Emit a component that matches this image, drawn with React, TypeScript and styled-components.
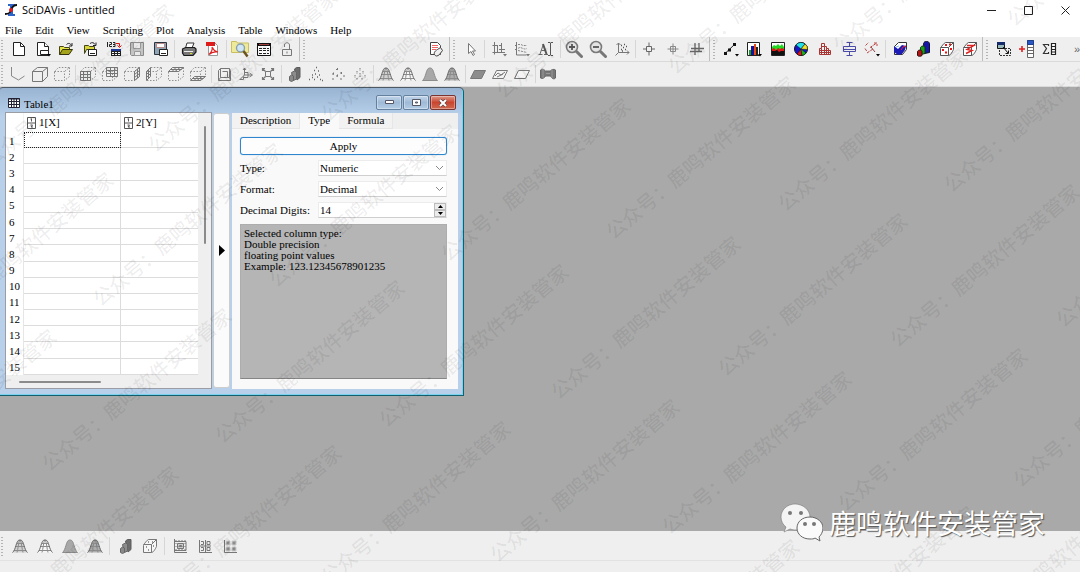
import React, { useState } from "react";
import styled, { createGlobalStyle, css } from "styled-components";

const Global = createGlobalStyle`
  *, *::before, *::after { box-sizing: border-box; }
  body { margin: 0; background: #efefef; overflow: hidden; }
  button, input, select { font: inherit; color: inherit; margin: 0; padding: 0; }
`;

const UI_FONT = `"Liberation Serif", "Noto Sans CJK SC", serif`;

const Page = styled.div`
  position: relative;
  min-height: 100vh;
  display: flex;
  flex-direction: column;
  overflow: hidden;
  background: #efefef;
  color: #000;
  font: 11px/11px ${UI_FONT};
`;

const TitleBar = styled.header`
  display: flex;
  align-items: center;
  gap: 8px;
  height: 20px;
  padding: 0 0 0 4px;
  background: #fff;
  font: 11px/18px "Open Sans", sans-serif;
`;

const AppName = styled.h1`
  flex: 1;
  margin: 0 0 0 -4px;
  font: inherit;
`;

const CaptionButton = styled.button`
  display: grid;
  place-items: center;
  width: 29px;
  height: 18px;
  border: 0;
  background: none;
`;

const MenuBar = styled.nav`
  display: flex;
  gap: 13px;
  height: 17px;
  padding: 4px 5px 0;
  background: #fff;
`;

const MenuItem = styled.button`
  border: 0;
  background: none;
  line-height: 11px;
`;

const ToolRow = styled.div`
  display: flex;
  height: 25px;
  border-bottom: 1px solid #dadada;
`;

const ToolBar = styled.div<{ $width?: number; $end?: boolean; $last?: boolean }>`
  display: flex;
  align-items: center;
  flex: ${(p) => (p.$last ? "1 1 0" : p.$width ? `0 0 ${p.$width}px` : "0 0 auto")};
  justify-content: ${(p) => (p.$end ? "flex-end" : "flex-start")};
  min-width: 0;
  margin-right: ${(p) => (p.$last ? 0 : 2)}px;
  border-right: ${(p) => (p.$last || !p.$width ? 0 : 1)}px solid #bdbdbd;
`;

const Handle = styled.span<{ $push?: boolean }>`
  flex: 0 0 7px;
  height: 20px;
  margin-right: ${(p) => (p.$push ? "auto" : 0)};
  background: radial-gradient(circle, #b4b4b4 0 1px, transparent 1px) 0 0 / 4px 3px repeat-y;
`;

const ToolButton = styled.button<{ $size?: number }>`
  flex: ${(p) => (p.$size ? `0 0 ${p.$size}px` : "1 1 0")};
  display: grid;
  place-items: center;
  min-width: 0;
  height: 24px;
  border: 0;
  background: none;
`;

const Divider = styled.span<{ $w?: number }>`
  flex: 0 0 ${(p) => p.$w ?? 4}px;
  height: 18px;
  background: linear-gradient(#d6d6d6, #d6d6d6) center / 1px 100% no-repeat;
`;

const More = styled.button`
  margin-left: auto;
  border: 0;
  background: none;
  color: #666;
  font: 11px/12px "Liberation Sans", sans-serif;
`;

const Workspace = styled.main`
  flex: 1;
  background: #a9a9a9;
`;

const SubWindow = styled.section`
  display: flex;
  flex-direction: column;
  width: 464px;
  height: 309px;
  padding: 0 5px 6px;
  border: solid #14606f;
  border-width: 1px 1px 1px 0;
  border-top-color: #4d5a66;
  border-radius: 3px 5px 0 0;
  background: linear-gradient(#98b4d2, #b8d0ea 28px);
  box-shadow: inset -1px -1px 0 #79d3ee;
`;

const SubTitle = styled.div`
  display: flex;
  align-items: center;
  gap: 1px;
  height: 24px;
  padding: 5px 2px 0 3px;
`;

const SubName = styled.h2`
  flex: 1;
  margin: 3px 0 0 3px;
  font: inherit;
`;

const FrameButton = styled.button<{ $close?: boolean }>`
  display: grid;
  place-items: center;
  width: 26px;
  height: 15px;
  border: 1px solid ${(p) => (p.$close ? "#7c3430" : "#64809f")};
  border-radius: 2px;
  background: ${(p) =>
    p.$close
      ? "linear-gradient(#dd9a8b, #c9452f 50%, #cf6a50)"
      : "linear-gradient(#c3d6ea, #9fbad7 50%, #b4cce6)"};
  box-shadow: inset 0 0 0 1px rgba(255, 255, 255, 0.35);
`;

const SubBody = styled.div`
  flex: 1;
  display: flex;
  min-height: 0;
`;

const Sheet = styled.div`
  flex: 0 0 207px;
  display: grid;
  grid-template: 1fr 14px / 1fr 13px;
  border: 1px solid #9a9da6;
  background: #efefef;
`;

const Grid = styled.table`
  width: 100%;
  height: 262px;
  border-collapse: separate;
  border-spacing: 0;
  table-layout: fixed;
  background: #fff;
`;

const HeadCell = styled.th<{ $w?: number }>`
  width: ${(p) => (p.$w ? `${p.$w}px` : "auto")};
  height: 19px;
  padding: 0 0 0 3px;
  border-right: 1px solid #dcdcdc;
  font-weight: normal;
  text-align: left;
  &:last-child { border-right: 0; }
  &:first-child { border-right-color: #f3f3f3; }
`;

const HeadLabel = styled.span`
  display: flex;
  align-items: center;
  gap: 3px;
`;

const RowHead = styled.th`
  padding: 2px 0 0 3px;
  border-right: 1px solid #e6e6e6;
  font-weight: normal;
  text-align: left;
  line-height: 11px;
`;

const Cell = styled.td<{ $current?: boolean }>`
  padding: 0;
  border-right: 1px solid #dcdcdc;
  border-bottom: 1px solid #dcdcdc;
  &:last-child { border-right: 0; }
  ${(p) => p.$current && css`outline: 1px dotted #222; outline-offset: -1px;`}
`;

const VTrack = styled.div`
  padding: 13px 0 0 6px;
`;

const HTrack = styled.div`
  padding: 6px 0 0 13px;
`;

const Thumb = styled.div<{ $w: number; $h: number }>`
  width: ${(p) => p.$w}px;
  height: ${(p) => p.$h}px;
  border-radius: 1px;
  background: #8b8b8b;
`;

const Collapse = styled.button`
  flex: 0 0 17px;
  display: grid;
  place-items: center;
  margin: 1px 2px 1px 1px;
  border: 1px solid #cdcdcd;
  border-radius: 3px;
  background: #fbfbfb;
`;

const Panel = styled.div`
  flex: 1;
  display: flex;
  flex-direction: column;
  min-width: 0;
  margin-top: 1px;
  background: #f9f9f9;
`;

const Tabs = styled.div`
  display: flex;
  height: 16px;
  background: #efefef;
`;

const Tab = styled.button<{ $on?: boolean }>`
  padding: 0 8px;
  border: 1px solid ${(p) => (p.$on ? "#f9f9f9" : "#e6e6e6")};
  border-width: 0 1px 1px 0;
  background: ${(p) => (p.$on ? "#f9f9f9" : "#f2f2f2")};
`;

const Form = styled.form`
  flex: 1;
  display: grid;
  grid-template: 18px repeat(3, 16px) 1fr / 78px minmax(0, 1fr);
  row-gap: 5px;
  align-items: center;
  padding: 8px 11px 10px 8px;
`;

const Apply = styled.button`
  grid-column: 1 / -1;
  height: 18px;
  border: 1px solid #2f86cf;
  border-radius: 3px;
  background: #fdfdfd;
  box-shadow: 0 0 1px #5aa9e6;
`;

const Field = styled.div`
  position: relative;
  display: flex;
  align-items: center;
  height: 16px;
  background: #fff;
  border: 1px solid #ececec;
  border-bottom-color: #cfcfcf;
`;

const Select = styled.select`
  flex: 1;
  min-width: 0;
  height: 14px;
  padding-left: 1px;
  border: 0;
  background: transparent;
  appearance: none;
`;

const Chevron = styled.svg`
  position: absolute;
  right: 2px;
  pointer-events: none;
`;

const NumberInput = styled.input`
  flex: 1;
  min-width: 0;
  height: 14px;
  padding-left: 1px;
  border: 0;
  background: transparent;
  appearance: textfield;
  &::-webkit-inner-spin-button { display: none; }
`;

const SpinColumn = styled.span`
  display: flex;
  flex-direction: column;
  width: 12px;
`;

const Step = styled.button`
  display: grid;
  place-items: center;
  height: 7px;
  border: 1px solid #bcbcbc;
  background: #ececec;
`;

const Info = styled.p`
  grid-column: 1 / -1;
  align-self: stretch;
  margin: 1px 0 0;
  padding: 3px 3px;
  border: 1px solid #adadad;
  border-bottom-color: #858585;
  background: #b5b5b5;
  white-space: pre-line;
`;

const BottomRow = styled.div`
  display: flex;
  align-items: center;
  height: 30px;
  border-bottom: 1px solid #e2e2e2;
`;

const StatusBar = styled.footer`
  height: 11px;
`;

const Brand = styled.div`
  position: absolute;
  right: 35px;
  bottom: 29px;
  display: flex;
  align-items: center;
  gap: 6px;
  color: #fff;
  font: 27px/40px "Noto Sans CJK SC", sans-serif;
  text-shadow: 1px 1px 1px #555;
`;

const MarkLayer = styled.div`
  position: absolute;
  inset: 0;
  overflow: hidden;
  pointer-events: none;
  color: rgba(0, 0, 0, 0.07);
  font: 500 20px/20px "Noto Sans CJK SC", sans-serif;
`;

const Mark = styled.span`
  position: absolute;
  margin: -10px 0 0 -10px;
  transform: rotate(-40deg);
  transform-origin: 10px 10px;
  white-space: nowrap;
`;

const Svg = ({ w = 16, h = 16, children }: { w?: number; h?: number; children: React.ReactNode }) => (
  <svg width={w} height={h} viewBox={`0 0 ${w} ${h}`} fill="none" stroke="#777" aria-hidden="true">
    {children}
  </svg>
);

const dropArrow = <path d="M12 13h4l-2 2.500z" fill="#000" stroke="none" />;
const solidCube = "M.5 5.500h10v10h-10zM.5 5.500l5-4h10l-5 4M15.500 1.500v9l-5 5";
const dashCube = (
  <path d="M.5 5.500h10v9h-10zM.5 5.500l4-4h11l-5 4M15.500 1.500v9l-5 4" strokeDasharray="1.500 1.500" stroke="#909090" />
);
const lens = (sign: string) => (
  <Svg w={18} h={18}>
    <path d="M11.500 11.500l5 5" stroke="#777" strokeWidth="3" strokeLinecap="round" />
    <circle cx="7" cy="7" r="5.500" fill="#e4e4e4" stroke="#7a7a7a" strokeWidth="1.600" />
    <path d={sign} stroke="#555" strokeWidth="1.800" />
  </Svg>
);
const bell = "M.5 14.500h15C12 12 12 2 8.500 2h-1C4 2 4 12 .5 14.500z";
const bellMesh = (
  <>
    <path d="M2 12.500h12M3.500 8.500h9M5 5.500h6M7.500 2C6.500 5 6 11 5 14.500M8.500 2C9.500 5 10 11 11 14.500" stroke="#8c8c8c" />
    <path d="M.5 14.500C4 12 4 2 7.500 2h1C12 2 12 12 15.500 14.500" stroke="#666" />
  </>
);
const dice = "M1.500 7.500c0-1 4-6 5-6h8v7c-1 2-3 6-5 6h-8zM1.500 6.500h8v8M9.500 6.500l5-5";

const icons: Record<string, React.ReactNode> = {
  page: <Svg><path d="M2.500 1.500h7l4 4v9h-11z" fill="#fff" stroke="#222" /><path d="M9.500 1.500v4h4" stroke="#222" /></Svg>,
  pageMenu: <Svg><path d="M2.500 1.500h7l4 4v9h-11z" fill="#fff" stroke="#222" /><path d="M9.500 1.500v4h4M5.500 9.500h8v4h-8z" fill="#fff" stroke="#222" />{dropArrow}</Svg>,
  open: <Svg><path d="M1.500 13.500v-8h4l1 1h5v2" fill="#e6e34a" stroke="#444419" /><path d="M1.500 13.500l3-5h10l-3.500 5z" fill="#a5a31c" stroke="#333310" /><path d="M8.500 3.500c2-2 4-1 5 1M14 2v3h-3" stroke="#222" /></Svg>,
  openTemplate: <Svg><path d="M2.500 12.500v-8h4l1 1h5v3h-8z" fill="#d9d63a" stroke="#444419" /><path d="M8 2.500c2-1.500 4-1 5 1M14 1.500v3h-3" stroke="#222" /><path d="M6.500 8.500h8v6h-8z" fill="#fff" stroke="#222" /><path d="M8 12.500h5" stroke="#222" /></Svg>,
  importAscii: <Svg><path d="M1.500 1v5M3.500 1.500h2v2h-2v2h2.500M7 1.500h2v4H7M7 3.500h2" stroke="#222" /><path d="M10 2.500h3.500v3M11.500 4.500l2 2 2-2" stroke="#e01515" /><path d="M5 8h10v7H5z" fill="#222" stroke="none" /><path d="M5 8h10v2H5z" fill="#203a9a" stroke="none" /><path d="M6 11.500h8M6 13.500h8" stroke="#fff" strokeDasharray="2 1" /></Svg>,
  save: <Svg><path d="M1.500 1.500h13v13h-12l-1-1z" fill="#c4c4c4" stroke="#8a8a8a" /><path d="M4.500 1.500h7v6h-7zM5.500 10.500h6v4h-6z" fill="#e9e9e9" stroke="#999" /></Svg>,
  saveTemplate: <Svg><path d="M1.500 1.500h12v12h-12z" fill="#8fa5b5" stroke="#2a3540" /><path d="M3.500 2.500h8v4h-8z" fill="#fff" stroke="#b88" /><path d="M6.500 8.500h8v6h-8z" fill="#fff" stroke="#222" /><path d="M8 12.500h5" stroke="#222" /></Svg>,
  print: <Svg><path d="M4.500 7l1.500-5h7l-2 5z" fill="#fff" stroke="#333" /><path d="M1.500 8l3-1.500h9l1.500 1.500v3l-3 3.500h-9L1.500 12z" fill="#777" stroke="#1c1c1c" strokeWidth="1.200" /><path d="M3 10.500h9" stroke="#eee" /><path d="M9 12.500h2" stroke="#dada22" /></Svg>,
  pdf: <Svg><path d="M4.500 1.500h6l3 3v10h-9z" fill="#fff" stroke="#999" /><path d="M2 1h9v4H2z" fill="#dd1b1b" stroke="none" /><path d="M5 13.500c3-3 3.500-6 3-7.500M8.500 6.500c1 3 3 4 5.500 4.500M5 13.500c2-2 6-3 9-2.500" stroke="#dd2222" strokeWidth="1.200" /></Svg>,
  explorer: <Svg w={20} h={18}><path d="M1.500 12.500v-11h5l1 1.500h11v9.500z" fill="#efe99a" stroke="#c9bf5e" /><circle cx="10.500" cy="8" r="4" fill="#cfe6f5" stroke="#8aa0b0" strokeWidth="1.400" /><path d="M13.500 11l4 5.500" stroke="#6b5322" strokeWidth="2.500" /></Svg>,
  table: <Svg><path d="M1.500 2.500h13v12h-13z" fill="#fff" stroke="#111" /><path d="M1 2h14v3H1z" fill="#111" stroke="none" /><path d="M3 3.500h10" stroke="#a44" /><path d="M3 7.500h10M3 9.500h10M3 12.500h10" stroke="#222" strokeDasharray="3 1" /></Svg>,
  lock: <Svg><path d="M3.500 8.500h9v6h-9z" fill="#eee" stroke="#777" /><path d="M5.500 6V4c0-3 5-3 5 0v4M8 10.500v2" stroke="#777" /></Svg>,
  note: <Svg><path d="M2.500 1.500h7l3 3v9h-10z" fill="#fff" stroke="#444" /><path d="M4 4.500h6M4 6.500h6M4 8.500h4" stroke="#e66" strokeWidth="1.200" /><path d="M6.500 13.500c-1-2 1-4 3-5l3-2 2 3-3 4c-2 2-4 2-5 0z" fill="#eee" stroke="#444" /></Svg>,
  pointer: <Svg><path d="M5.500 2.500v10l2.500-2 2 4 1.500-1-2-3.500h3z" fill="#fff" stroke="#777" /></Svg>,
  axes: <Svg><path d="M3.500 1v12.500M1.500 11.500h6M1.500 4.500h5M6.500 4v8M10.500 2v10M8 4.500h2M8 8.500h6M7 11.500h7" stroke="#777" /><path d="M12 13h4l-2 2.500z" fill="#777" stroke="none" /></Svg>,
  curves: <Svg><path d="M2.500 1v13h10M1 4.500h1M1 8.500h1" stroke="#777" /><path d="M4 3.500h3l2 1h4M4 7.500c3-3 5 2 9 0M4 9.500l9 2" stroke="#888" strokeDasharray="2 1" /><path d="M12 13h4l-2 2.500z" fill="#777" stroke="none" /></Svg>,
  text: <Svg><path d="M.5 13.500h4M6 13.500h4M2 13l3.500-10M3.500 9.500h4" stroke="#666" /><path d="M5 3l3.500 10" stroke="#555" strokeWidth="2" /><path d="M12.500 2v12M10 1.500h2l.5.5.5-.5h2M10 14.500h2l.5-.5.5.500h2" stroke="#555" /></Svg>,
  zoomIn: lens("M4 7h6M7 4v6"),
  zoomOut: lens("M4 7h6"),
  rescale: <Svg><path d="M4.500 2v9.500H15M2.500 4l2-2 2 2M13 9.500l2 2-2 2M4.500 11.500l-3 3" /><path d="M7 4.500h1M10 3.500h1M12 5.500h1M9 6.500h1M7 8.500h1M11 8.500h1M8 10h1" stroke="#555" strokeWidth="1.300" /></Svg>,
  reader: <Svg><path d="M5.500 5.500h5v5h-5zM8 1.500v4M8 10.500v4M2 8h3M11 8h3" stroke="#666" /></Svg>,
  selector: <Svg><path d="M5.500 5.500h5v5h-5zM8 2.500v11M2.500 8h11" stroke="#888" /></Svg>,
  move: <Svg><path d="M6 2v12M10 2v9M2 7.500h13M1 10.500h12" stroke="#666" strokeWidth="1.300" /></Svg>,
  line: <Svg><path d="M2 12.500l10-9.500" stroke="#222" /><path d="M1 11h3v3H1zM5 7.500h3v3H5zM10 2h3v3h-3z" fill="#111" stroke="none" />{dropArrow}</Svg>,
  bars: <Svg><path d="M1.500 1.500h12v13h-12z" fill="#fff" stroke="#222" /><path d="M3 9h2v5H3z" fill="#17a017" stroke="none" /><path d="M5 5h3v9H5z" fill="#11119c" stroke="none" /><path d="M8 3h2v11H8z" fill="#e84a12" stroke="none" /><path d="M10 6h2v8h-2z" fill="#222" stroke="none" />{dropArrow}</Svg>,
  area: <Svg><path d="M1.500 1.500h13v13h-13z" fill="#fff" stroke="#222" /><path d="M2 6l2-2 2 1 2-2 2 2 2-2 2 3v4H2z" fill="#22d822" stroke="none" /><path d="M2 8l2-1 2 2 2-2 2 1 2-1 2 1v3H2z" fill="#e01818" stroke="none" /><path d="M2 10l3 0 2-1 2 2 2-1 3 0v4H2z" fill="#111" stroke="none" /></Svg>,
  pie: <Svg><circle cx="8" cy="8" r="6.500" fill="#1515c8" stroke="#111" /><path d="M8 8L3 4a6 6 0 0 1 9-1z" fill="#20dfe8" stroke="#111" strokeWidth=".5" /><path d="M8 8l4-5a6 6 0 0 1 2.500 5.500z" fill="#f2e32c" stroke="#111" strokeWidth=".5" /><path d="M8 8l1 6.500a6 6 0 0 1-5-1.500z" fill="#e01818" stroke="#111" strokeWidth=".5" /><path d="M8 8l5 4a6 6 0 0 1-4 2.500z" fill="#1cb21c" stroke="#111" strokeWidth=".5" /></Svg>,
  histogram: <Svg><path d="M2.500 13.500v-6h2v-5h3v3h2v2h2v2h2v4zM4.500 7.500v6M7.500 5.500v8M9.500 7.500v6M11.500 9.500v4M2.500 9.500h9M2.500 11.500h11M4.500 5.500h3" stroke="#a83434" /></Svg>,
  box: <Svg><path d="M2.500 5.500h12v5h-12zM2.500 8.500h12M8.500 2v3M8.500 11v3M5.500 1.500h6M5.500 14.500h6" stroke="#4a4aa8" /></Svg>,
  vectors: <Svg><path d="M1.500 4.500l3-3M6 6.500l6-4M3 12l6-4M10 2h3v3M1 7.500l2 3" stroke="#b44" strokeDasharray="3 1" /><path d="M7 6l4 5" stroke="#844" />{dropArrow}</Svg>,
  surface: <Svg><path d="M2.500 5.500l4-4h8v7l-4 5h-8z" fill="#fff" stroke="#333" /><path d="M2 5l4 3 4-4 4 1-1 4-3 4-4 1-4-3z" fill="#1c1cb5" stroke="none" /><path d="M9 9l2-3 3-1" stroke="#e22" /><path d="M4 6l3-1" stroke="#8be" /></Svg>,
  bars3d: <Svg><path d="M8.500 2.500c1-3 5-3 6 0v9l-5 1z" fill="#1616a8" stroke="#112" /><path d="M5.500 6.500c1-2 4-2 4.500 0v6l-4 1z" fill="#16a016" stroke="#131" /><path d="M2.500 10.500c1-2 4-2 4.500 0v4c-1 1-4 1-4.500 0z" fill="#b01616" stroke="#311" /></Svg>,
  scatter3d: <Svg><path d={dice} fill="#fff" stroke="#555" /><path d="M6 4h2M10 3.500h2M3 9h2M6 11.500h2M11 8h2" stroke="#e11" strokeWidth="1.800" /></Svg>,
  line3d: <Svg><path d={dice} fill="#fff" stroke="#555" /><path d="M5 4.500h7l-7 4 5 1-6 3" stroke="#d22" strokeWidth="1.400" /></Svg>,
  selectCol: <Svg><path d="M1.500 1.500h7v6h-7z" fill="#9bb" stroke="#111" /><path d="M1 1h8v3H1z" fill="#142a6b" stroke="none" /><path d="M9 7.500h5.500v7h-11v-6" stroke="#333" strokeDasharray="2 1" /><path d="M7 6l5 6M12.500 9.500v3h-3" stroke="#111" /></Svg>,
  addCol: <Svg w={18} h={18}><path d="M1 9h6M4 6v6" stroke="#e02020" strokeWidth="1.600" /><path d="M9.500.5h6v17h-6zM9.500 7.500h6M9.500 10.500h6M9.500 13.500h6" fill="#fff" stroke="#666" /><path d="M9.500.5h6v4h-6z" fill="#2857c4" stroke="#1c3c8c" /></Svg>,
  sigma: <Svg><path d="M6.500 5V3.500h-5l3 4-3 5h5V11" stroke="#333" strokeWidth="1.200" /><path d="M9.500 2.500h4v11h-4zM9.500 5.500h4M9.500 8.500h4M9.500 11h4" fill="#fff" stroke="#222" strokeWidth="1.200" /></Svg>,
  corner: <Svg><path d="M1.500 1v9l7 4 6-4" stroke="#888" /></Svg>,
  frame: <Svg><path d={solidCube} /></Svg>,
  box3d: <Svg>{dashCube}</Svg>,
  gridFront: <Svg>{dashCube}<path d="M.5 5.500h10v9h-10zM.5 8.500h10M.5 11.500h10M3.500 5.500v9M7.500 5.500v9" /></Svg>,
  gridBack: <Svg>{dashCube}<path d="M4.500 1.500h11v9h-11zM4.500 4.500h11M4.500 7.500h11M8.500 1.500v9M12.500 1.500v9" /></Svg>,
  gridRight: <Svg>{dashCube}<path d="M10.500 5.500l5-4v9l-5 4zM13.500 3v9M10.500 8.500l5-4M10.500 11.500l5-4" /></Svg>,
  gridLeft: <Svg>{dashCube}<path d="M.5 5.500l4-4v9l-4 4zM2.500 3v9M.5 8.500l4-4M.5 11.500l4-4" /></Svg>,
  gridTop: <Svg>{dashCube}<path d="M.5 5.500l4-4h11l-5 4zM2.500 3.500h11M4 5.500l4-4M7 5.500l5-4" /></Svg>,
  gridBottom: <Svg>{dashCube}<path d="M.5 14.500l4-4h11l-5 4zM2.500 12.500h11M4 14.500l4-4M7 14.500l5-4" /></Svg>,
  perspective: <Svg><path d="M4.500 2.500h9v9h-9zM2.500 14.500h12M2.500 14.500l2-3M14.500 14.500l-1-3M2.500 4.500v10M14.500 4.500v10M2.500 4.500l2-2M14.500 4.500l-1-2M6.500 5.500h5v6" /></Svg>,
  reset: <Svg><path d="M6.500 2v7h7M6.500 9l-4 4M5 4l1.500-2L8 4M6 11.500h4v-5h-3M1.500 13.500h4v-3M11.500 7l3 2-3 2" /></Svg>,
  fit: <Svg><path d="M5.500 5.500h5v5h-5z" /><path d="M2.500 2.500l3 3M13.500 2.500l-3 3M2.500 13.500l3-3M13.500 13.500l-3-3M2.500 5V2.500H5M11 2.500h2.500V5M2.500 11v2.500H5M11 13.500h2.500V11" strokeWidth="1.200" /></Svg>,
  bars3dGray: <Svg><path d="M8.500 3l2-1.500h3.500v10l-3 2.500z" fill="#6c6c6c" stroke="#5c5c5c" /><path d="M5.500 6.500l3-1.500 2 1v7l-3 1.500z" fill="#8c8c8c" stroke="#666" /><path d="M3.500 10.500l2-1.500 2 1v4.500l-2 1-2-1z" fill="#8a8a8a" stroke="#666" /></Svg>,
  dots: <Svg><path d="M8 1.500h1M6 4.500h1M10 5h1M7 8h1M4 9h1M11 9h1M9 11h1M1 13.500h1M6 13.500h1M12 13.500h1M14 14.500h1M4 11.500h1" strokeWidth="1.300" stroke="#666" /></Svg>,
  crosses: <Svg><path d="M6 3.500h3M7.500 2v3M2 8h3M3.500 6.500v3M10 7h3M11.500 6v3M6 10h3M7.500 8.500v3M2 13h3M10 13h3M13 10h2" stroke="#777" strokeDasharray="2 1" /></Svg>,
  lines3d: <Svg><path d="M8 2v3M5 5v3M11 5v3M8 7v4M3 9v3M13 9v3M5 12v2M10 12v2" stroke="#777" strokeDasharray="1.500 1" /></Svg>,
  meshFill: <Svg><path d={bell} fill="#d0d0d0" stroke="none" />{bellMesh}</Svg>,
  mesh: <Svg><path d={bell} fill="#f7f7f7" stroke="none" />{bellMesh}</Svg>,
  bellFill: <Svg><path d={bell} fill="#a8a8a8" stroke="#8c8c8c" /></Svg>,
  bellMeshDark: <Svg><path d={bell} fill="#adadad" stroke="none" />{bellMesh}</Svg>,
  floorFill: <Svg w={18}><path d="M1.500 12.500l4-8h11l-4 8z" fill="#8c8c8c" /></Svg>,
  floorIso: <Svg w={18}><path d="M1.500 12.500l4-8h11l-4 8z" fill="#f2f2f2" /><path d="M4 10l3-3 3 2 4-3M6 11l6-3" /></Svg>,
  floor: <Svg w={18}><path d="M1.500 12.500l4-8h11l-4 8z" fill="#f4f4f4" /></Svg>,
  animate: <Svg w={18}><path d="M1.500 4c2-2 4 0 5 1h5c1-2 4-2 5-1v8c-2 2-4 0-5-2h-5c-1 2-3 3-5 2z" fill="#777" stroke="#666" /><path d="M4 3v9M13 3v9M7 7.500h4" stroke="#999" /></Svg>,
  cubeDots: <Svg><path d={dice} fill="#f6f6f6" /><path d="M6 4h1M10 4h1M4 9h1M6 12h1M11 8h1" strokeWidth="1.500" /></Svg>,
  contour: <Svg><path d="M2.500 1v13.500H15M2.500 3.500H14v9H2.500" /><path d="M5.500 5.500h6v5h-6zM7.500 7.500h2v1h-2z" fill="#ccc" /><path d="M4 2v12M7 2v12M10 2v12M13 2v12" strokeDasharray="1 2" /></Svg>,
  contourLines: <Svg><path d="M2.500 2v12.500H15" /><path d="M4 3.500h2.500v3H4M10 3.500h3v3h-3zM4 9.500h2.500v3H4M10 9.500h3v3h-3zM3 8h11M8.500 2v12" /></Svg>,
  grayMap: <Svg><path d="M2.500 2v12.500H15" /><path d="M4 3h4v4H4zM10 3h4v4h-4zM4 9h4v4H4zM10 9h4v4h-4z" fill="#8c8c8c" stroke="#ccc" /></Svg>,
};

const Tools = ({ names, size, gap }: { names: string[]; size?: number; gap?: number }) => (
  <>
    {names.map((n, i) =>
      n === "|" ? (
        <Divider key={i} $w={gap} />
      ) : (
        <ToolButton key={i} type="button" aria-label={n} $size={size}>
          {icons[n]}
        </ToolButton>
      )
    )}
  </>
);

const split = (s: string) => s.split(" ");
const fileTools = split("page pageMenu open openTemplate importAscii save saveTemplate | print pdf | explorer table lock");
const graphTools = split("pointer | axes curves text | zoomIn zoomOut rescale | reader selector move");
const plotTools = split("line bars area pie histogram box vectors | surface bars3d scatter3d line3d");
const columnTools = split("selectCol addCol sigma");
const surfaceTools = split(
  "corner frame box3d | gridFront gridBack gridRight gridLeft gridTop gridBottom | perspective reset fit | bars3dGray dots crosses lines3d | meshFill mesh bellFill bellMeshDark | floorFill floorIso floor | animate"
);
const matrixTools = split("meshFill mesh bellFill bellMeshDark | bars3dGray cubeDots | contour contourLines grayMap");
const menus = ["File", "Edit", "View", "Scripting", "Plot", "Analysis", "Table", "Windows", "Help"];
const rows = Array.from({ length: 15 }, (_, i) => i + 1);

// Centre of the first character of each repeated mark.
const marks: [number, number][] = [
  [-6, 156], [158, 141], [331, 110], [506, 87], [678, 63], [843, 42], [1017, 15],
  [-66, 324], [103, 295], [279, 276], [451, 250], [616, 228], [788, 200], [954, 181],
  [-123, 481], [52, 460], [225, 432], [389, 416], [561, 388], [728, 365], [900, 336], [1066, 316],
  [-1, 618], [162, 597], [331, 573], [500, 551], [672, 523], [848, 500], [1023, 476],
  [620, 691], [796, 658], [967, 635],
];

const NumericIcon = () => (
  <svg width="9" height="12" viewBox="0 0 9 12" fill="none" stroke="#555" aria-hidden="true">
    <path d="M.5.500h8v11h-8zM.5 6h8M4.500 1.500v3M3.500 2h1M3.500 8h2L4 10h2" />
  </svg>
);

const ComboBox = ({ id, options }: { id: string; options: string[] }) => (
  <Field>
    <Select id={id}>
      {options.map((o) => (
        <option key={o}>{o}</option>
      ))}
    </Select>
    <Chevron width="9" height="6" viewBox="0 0 9 6" fill="none" stroke="#888">
      <path d="M1 1l3.500 3.500L8 1" />
    </Chevron>
  </Field>
);

export default function App() {
  const [tab, setTab] = useState("Type");
  const [digits, setDigits] = useState(14);
  return (
    <Page>
      <Global />
      <TitleBar>
        <svg width="14" height="14" viewBox="0 0 14 14" aria-hidden="true">
          <path d="M4 1h7v2H9v8h2v2H4v-2h2V3H4z" fill="#2d62c8" />
          <path d="M1 11c4 0 5-1 6-4s3-5 6-5" fill="none" stroke="#111" strokeWidth="1.800" />
          <circle cx="7" cy="7" r="2" fill="#e01c1c" />
        </svg>
        <AppName>SciDAVis - untitled</AppName>
        <CaptionButton type="button" aria-label="Minimize">
          <svg width="9" height="9" stroke="#222"><path d="M0 4.500h9" /></svg>
        </CaptionButton>
        <CaptionButton type="button" aria-label="Maximize">
          <svg width="9" height="9" stroke="#222" fill="none"><path d="M.5.500h8v8h-8z" /></svg>
        </CaptionButton>
        <CaptionButton type="button" aria-label="Close">
          <svg width="9" height="9" stroke="#222"><path d="M.5.500l8 8M8.500.500l-8 8" /></svg>
        </CaptionButton>
      </TitleBar>
      <MenuBar>
        {menus.map((m) => (
          <MenuItem key={m} type="button">{m}</MenuItem>
        ))}
      </MenuBar>
      <ToolRow>
        <ToolBar $width={300}>
          <Handle />
          <Tools names={fileTools} />
        </ToolBar>
        <ToolBar $width={148} $end>
          <Handle $push />
          <Tools names={["note"]} size={26} />
        </ToolBar>
        <ToolBar $width={258}>
          <Handle />
          <Tools names={graphTools} />
        </ToolBar>
        <ToolBar $width={271}>
          <Handle />
          <Tools names={plotTools} />
        </ToolBar>
        <ToolBar $last>
          <Handle />
          <Tools names={columnTools} size={23} />
          <More type="button" aria-label="More tools">»</More>
        </ToolBar>
      </ToolRow>
      <ToolRow>
        <ToolBar>
          <Handle />
          <Tools names={surfaceTools} size={22} />
        </ToolBar>
      </ToolRow>
      <Workspace>
        <SubWindow>
          <SubTitle>
            <svg width="12" height="10" viewBox="0 0 12 10" fill="#fff" stroke="#223" aria-hidden="true">
              <path d="M.5.500h11v9H.5zM.5 3.500h11M.5 6.500h11M3.500.500v9M6 .5v9M8.500.500v9" />
              <path d="M0 1h12" />
            </svg>
            <SubName>Table1</SubName>
            <FrameButton type="button" aria-label="Minimize window">
              <svg width="9" height="5"><path d="M.5.500h8v3h-8z" fill="#fff" stroke="#556" /></svg>
            </FrameButton>
            <FrameButton type="button" aria-label="Maximize window">
              <svg width="9" height="8"><path d="M.5.500h8v6h-8z" fill="#fff" stroke="#556" /><path d="M3.500 3h2v1h-2z" fill="#9bd" stroke="#556" /></svg>
            </FrameButton>
            <FrameButton type="button" $close aria-label="Close window">
              <svg width="10" height="8" fill="none"><path d="M2 1l6 6M8 1L2 7" stroke="#644" strokeWidth="3.500" /><path d="M2 1l6 6M8 1L2 7" stroke="#fff" strokeWidth="2" /></svg>
            </FrameButton>
          </SubTitle>
          <SubBody>
            <Sheet>
              <Grid>
                <thead>
                  <tr>
                    <HeadCell $w={18} aria-label="Row" />
                    <HeadCell $w={97}><HeadLabel><NumericIcon />1[X]</HeadLabel></HeadCell>
                    <HeadCell><HeadLabel><NumericIcon />2[Y]</HeadLabel></HeadCell>
                  </tr>
                </thead>
                <tbody>
                  {rows.map((r) => (
                    <tr key={r}>
                      <RowHead scope="row">{r}</RowHead>
                      <Cell $current={r === 1} />
                      <Cell />
                    </tr>
                  ))}
                </tbody>
              </Grid>
              <VTrack><Thumb $w={2} $h={118} /></VTrack>
              <HTrack><Thumb $w={82} $h={2} /></HTrack>
            </Sheet>
            <Collapse type="button" aria-label="Hide column panel">
              <svg width="6" height="11"><path d="M0 0l6 5.500L0 11z" /></svg>
            </Collapse>
            <Panel>
              <Tabs role="tablist">
                {["Description", "Type", "Formula"].map((t) => (
                  <Tab key={t} type="button" role="tab" aria-selected={t === tab} $on={t === tab} onClick={() => setTab(t)}>
                    {t}
                  </Tab>
                ))}
              </Tabs>
              <Form onSubmit={(e) => e.preventDefault()}>
                <Apply type="submit">Apply</Apply>
                <label htmlFor="type">Type:</label>
                <ComboBox id="type" options={["Numeric"]} />
                <label htmlFor="format">Format:</label>
                <ComboBox id="format" options={["Decimal"]} />
                <label htmlFor="digits">Decimal Digits:</label>
                <Field>
                  <NumberInput id="digits" type="number" value={digits} onChange={(e) => setDigits(Number(e.target.value))} />
                  <SpinColumn>
                    <Step type="button" aria-label="Increase" onClick={() => setDigits(digits + 1)}>
                      <svg width="5" height="3"><path d="M0 3l2.500-3L5 3z" /></svg>
                    </Step>
                    <Step type="button" aria-label="Decrease" onClick={() => setDigits(digits - 1)}>
                      <svg width="5" height="3"><path d="M0 0l2.500 3L5 0z" /></svg>
                    </Step>
                  </SpinColumn>
                </Field>
                <Info>{"Selected column type:\nDouble precision\nfloating point values\nExample: 123.12345678901235"}</Info>
              </Form>
            </Panel>
          </SubBody>
        </SubWindow>
      </Workspace>
      <BottomRow>
        <Handle />
        <Tools names={matrixTools} size={25} gap={5} />
      </BottomRow>
      <StatusBar />
      <MarkLayer aria-hidden="true">
        {marks.map(([x, y]) => (
          <Mark key={`${x},${y}`} style={{ left: x, top: y }}>公众号：鹿鸣软件安装管家</Mark>
        ))}
      </MarkLayer>
      <Brand>
        <svg width="43" height="40" viewBox="0 0 43 40" aria-hidden="true">
          <path d="M15 1C7 1 1 7 1 14c0 4 2 8 5 10l-2 5 6-3c2 .8 4 1 6 1 8 0 14-6 14-13S23 1 15 1z" fill="#f4f4f4" stroke="#777" strokeWidth=".6" />
          <path d="M30 14c-8 0-13 5-13 11s5 11 13 11c2 0 4 0 5-1l5 3-1-4c2-2 4-5 4-9 0-6-6-11-13-11z" fill="#fafafa" stroke="#666" />
          <g fill="#777"><circle cx="10" cy="10" r="2" /><circle cx="21" cy="10" r="2" /><circle cx="25" cy="21" r="2" /><circle cx="34" cy="21" r="2" /></g>
        </svg>
        鹿鸣软件安装管家
      </Brand>
    </Page>
  );
}
